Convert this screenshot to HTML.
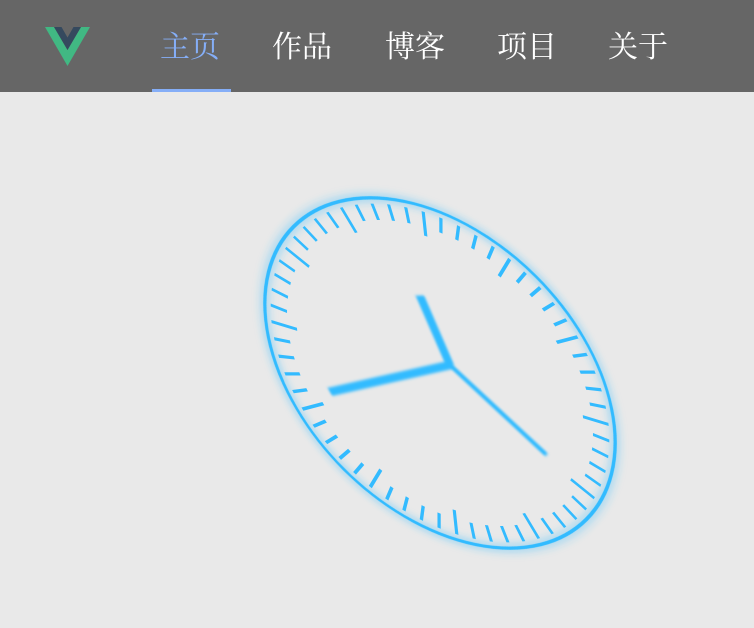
<!DOCTYPE html>
<html><head><meta charset="utf-8"><style>
body{margin:0;width:754px;height:628px;background:#e9e9e9;overflow:hidden;font-family:"Liberation Serif","Noto Serif CJK SC",serif}
.nav{position:absolute;left:0;top:0;width:754px;height:92px;background:#666}
.it{position:absolute;top:26px;font-size:30px;line-height:44px;color:#fff;width:80px;text-align:center}
.act{color:#85aef7}
.ul{position:absolute;left:152px;top:89px;width:79px;height:3px;background:#85aef7}
</style></head><body>
<div class="nav">
<svg style="position:absolute;left:45px;top:27px" width="45" height="39" viewBox="0 0 45 39">
<polygon points="0,0 9,0 22.5,23 36,0 45,0 22.5,39" fill="#41b883"/>
<polygon points="9,0 16.5,0 22.5,10.5 28.5,0 36,0 22.5,23" fill="#35495e"/>
</svg>
<div class="it act" style="left:150px">主页</div>
<div class="it" style="left:262px">作品</div>
<div class="it" style="left:375px">博客</div>
<div class="it" style="left:487px">项目</div>
<div class="it" style="left:598px">关于</div>
<div class="ul"></div>
</div>
<svg style="position:absolute;left:0;top:0" width="754" height="628">
<defs>
<filter id="g" x="-30%" y="-30%" width="160%" height="160%"><feGaussianBlur stdDeviation="4" result="b"/><feMerge><feMergeNode in="b"/><feMergeNode in="SourceGraphic"/></feMerge></filter>
<filter id="bl"><feGaussianBlur stdDeviation="1.1"/></filter>
</defs>
<g transform="translate(440,373) rotate(45) scale(1.38,0.907)" fill="none" stroke="#33bbff">
<circle r="150" stroke-width="2.8" filter="url(#g)"/>
<g id="ticks" stroke-width="2.8"></g>
<g filter="url(#bl)" stroke-linecap="butt">
<line x1="1" y1="-14" x2="-50" y2="-44.7" stroke-width="8"/>
<line x1="1" y1="-14" x2="-46.7" y2="100.6" stroke-width="7"/>
<line x1="1" y1="-14" x2="96.5" y2="-19.2" stroke-width="4.5"/>
</g>
</g>
</svg>
<script>
var g=document.getElementById('ticks'),s='';
for(var k=0;k<60;k++){var a=(-159+6*k)*Math.PI/180,big=k%5==0,r1=big?123:131,r2=145;
s+='<line x1="'+(r1*Math.cos(a)).toFixed(1)+'" y1="'+(r1*Math.sin(a)).toFixed(1)+'" x2="'+(r2*Math.cos(a)).toFixed(1)+'" y2="'+(r2*Math.sin(a)).toFixed(1)+'"/>';}
g.innerHTML=s;
</script>
</body></html>
